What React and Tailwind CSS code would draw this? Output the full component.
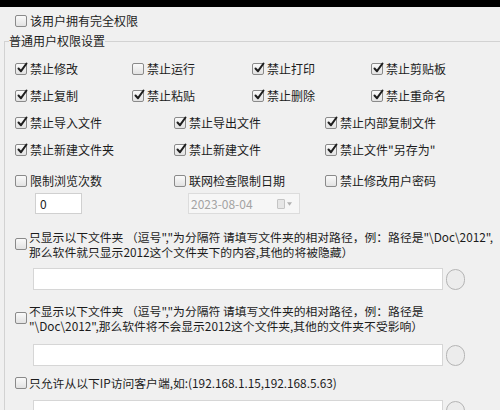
import React from "react";

const row1 = [
  ["禁止修改", true],
  ["禁止运行", false],
  ["禁止打印", true],
  ["禁止剪贴板", true],
];
const row2 = [
  ["禁止复制", true],
  ["禁止粘贴", true],
  ["禁止删除", true],
  ["禁止重命名", true],
];
const row3 = [
  ["禁止导入文件", true],
  ["禁止导出文件", true],
  ["禁止内部复制文件", true],
];
const row4 = [
  ["禁止新建文件夹", true],
  ["禁止新建文件", true],
  ["禁止文件\"另存为\"", true],
];
const row5 = [
  ["限制浏览次数", false],
  ["联网检查限制日期", false],
  ["禁止修改用户密码", false],
];

function Box({ checked }) {
  return (
    <span className="relative inline-block w-[12px] h-[12px] shrink-0 rounded-[2px] border border-[#8a8a8a] bg-gradient-to-b from-[#fafafa] to-[#e2e2e2]">
      {checked && (
        <svg
          viewBox="0 0 12 12"
          className="absolute left-[0px] top-[-2px] w-[12px] h-[12px]"
        >
          <path
            d="M2.5 6.5 L5 9.2 L10.5 1.5"
            fill="none"
            stroke="#1e1e1e"
            strokeWidth="2"
            strokeLinecap="round"
            strokeLinejoin="round"
          />
        </svg>
      )}
    </span>
  );
}

function Check({ label, checked }) {
  return (
    <div className="flex items-center gap-[3px] whitespace-nowrap">
      <Box checked={checked} />
      <span>{label}</span>
    </div>
  );
}

function PathInput() {
  return (
    <div className="flex items-center pl-[28px]">
      <div className="w-[410px] h-[22px] bg-white border border-[#d6d6d6]" />
      <div className="ml-[3px] w-[19px] h-[21px] rounded-full border border-[#b4b4b4] bg-[#ececec]" />
    </div>
  );
}

export default function App() {
  return (
    <div className="w-[500px] h-[410px] overflow-hidden bg-[#f0f0f0] text-[12px] leading-[14px] text-[#1c1c1c] font-['Noto_Sans_CJK_SC',sans-serif]">
      <div className="h-[7px] bg-black" />

      <div className="mt-[7px] pl-[15px] h-[14px] flex items-center">
        <Check label="该用户拥有完全权限" checked={false} />
      </div>

      <fieldset className="mt-[6px] ml-[4px] w-[520px] border-l border-t border-[#d2d2d2]">
        <legend className="ml-[4px] leading-[14px]">普通用户权限设置</legend>

        <div className="pt-[7px] pl-[10px]">
          <div className="grid grid-cols-[117px_120px_119px_auto] h-[27px] items-center">
            {row1.map(([l, c]) => (
              <Check key={l} label={l} checked={c} />
            ))}
          </div>
          <div className="grid grid-cols-[117px_120px_119px_auto] h-[27px] items-center">
            {row2.map(([l, c]) => (
              <Check key={l} label={l} checked={c} />
            ))}
          </div>
          <div className="grid grid-cols-[159px_151px_auto] h-[27px] items-center">
            {row3.map(([l, c]) => (
              <Check key={l} label={l} checked={c} />
            ))}
          </div>
          <div className="grid grid-cols-[159px_151px_auto] h-[27px] items-center">
            {row4.map(([l, c]) => (
              <Check key={l} label={l} checked={c} />
            ))}
          </div>
          <div className="grid grid-cols-[159px_151px_auto] mt-[9px] h-[18px] items-center">
            {row5.map(([l, c]) => (
              <Check key={l} label={l} checked={c} />
            ))}
          </div>

          <div className="grid grid-cols-[159px_151px_auto] mt-[3px] h-[21px]">
            <div className="pl-[20px]">
              <div className="w-[47px] h-[21px] bg-white border border-[#d0d0d0] flex items-center pl-[4px]">
                0
              </div>
            </div>
            <div className="pl-[14px]">
              <div className="w-[112px] h-[21px] bg-[#f6f6f6] border border-[#dcdcdc] flex items-center pl-[2px] text-[#a3a3a3]">
                <span className="flex-1">2023-08-04</span>
                <span className="w-[8px] h-[10px] rounded-[1px] border border-[#c4c4c4] bg-[#e6e6e6]" />
                <svg viewBox="0 0 6 4" className="w-[5px] h-[4px] ml-[2px] mr-[7px]">
                  <path d="M0 0 L6 0 L3 4 Z" fill="#b0b0b0" />
                </svg>
              </div>
            </div>
            <div />
          </div>
        </div>

        <div className="pl-[10px] mt-[15px] flex items-center gap-[2px]">
          <Box checked={false} />
          <p className="whitespace-nowrap text-[11.8px] leading-[15px]">
            只显示以下文件夹 （逗号","为分隔符 请填写文件夹的相对路径，例：路径是"\Doc\2012",
            <br />
            那么软件就只显示2012这个文件夹下的内容,其他的将被隐藏）
          </p>
        </div>
        <div className="mt-[9px]">
          <PathInput />
        </div>

        <div className="pl-[10px] mt-[13px] flex items-center gap-[2px]">
          <Box checked={false} />
          <p className="whitespace-nowrap text-[11.8px] leading-[15px]">
            不显示以下文件夹 （逗号","为分隔符 请填写文件夹的相对路径，例：路径是
            <br />
            "\Doc\2012",那么软件将不会显示2012这个文件夹,其他的文件夹不受影响）
          </p>
        </div>
        <div className="mt-[11px]">
          <PathInput />
        </div>

        <div className="pl-[10px] mt-[9px] flex items-center gap-[2px]">
          <Box checked={false} />
          <p className="whitespace-nowrap text-[11.8px] leading-[15px]">
            只允许从以下IP访问客户端,如:(192.168.1.15,192.168.5.63)
          </p>
        </div>
        <div className="mt-[10px]">
          <PathInput />
        </div>
      </fieldset>
    </div>
  );
}
